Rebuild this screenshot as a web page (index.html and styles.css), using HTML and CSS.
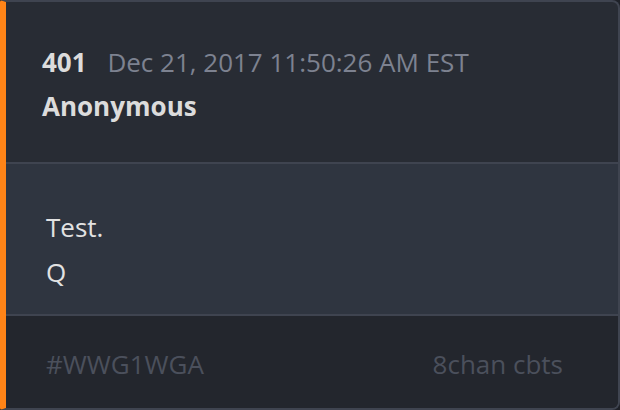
FILE: index.html
```html
<!DOCTYPE html>
<html lang="en">
<head>
    <meta charset="UTF-8">
    <meta name="viewport" content="width=device-width, initial-scale=1.0">
    <title>Post 401</title>
    <link rel="stylesheet" href="styles.css">
</head>
<body>
    <div class="post">
        <div class="post-header">
            <div class="post-meta">
                <span class="post-num">401</span>
                <span class="post-date">Dec 21, 2017 11:50:26 AM EST</span>
            </div>
            <div class="post-author">Anonymous</div>
        </div>
        <div class="post-body">
            <p>Test.</p>
            <p>Q</p>
        </div>
        <div class="post-footer">
            <span>#WWG1WGA</span>
            <span>8chan cbts</span>
        </div>
    </div>
</body>
</html>
```

FILE: styles.css
```css
body {
    margin: 0;
    background-color: #1e2128;
    font-family: "Open Sans", sans-serif;
}
.post {
    width: 620px;
    height: 410px;
    box-sizing: border-box;
    border: 2px solid #3f4450;
    border-left: 6px solid #ff8417;
    border-radius: 2px 8px 8px 2px;
    background: #282c34;
    display: flex;
    flex-direction: column;
    overflow: hidden;
}
.post-header {
    height: 162px;
    flex-shrink: 0;
    box-sizing: border-box;
    padding: 39px 36px 0;
    border-bottom: 2px solid #3f4450;
}
.post-meta {
    font-size: 26px;
    line-height: 42px;
}
.post-num {
    font-weight: 700;
    color: #dcdcdc;
    margin-right: 14px;
}
.post-date {
    color: #7d8290;
}
.post-author {
    margin-top: 2px;
    font-size: 26px;
    font-weight: 700;
    line-height: 42px;
    color: #dcdcdc;
}
.post-body {
    height: 152px;
    flex-shrink: 0;
    box-sizing: border-box;
    padding: 41px 40px 0;
    background: #2f3540;
    border-bottom: 2px solid #3f4450;
    color: #e2e2e2;
    font-size: 26px;
}
.post-body p {
    margin: 0;
    line-height: 45px;
}
.post-footer {
    flex: 1;
    display: flex;
    justify-content: space-between;
    align-items: center;
    padding: 3px 55px 0 40px;
    background: #23262d;
    color: #4b505c;
    font-size: 26px;
}
```
